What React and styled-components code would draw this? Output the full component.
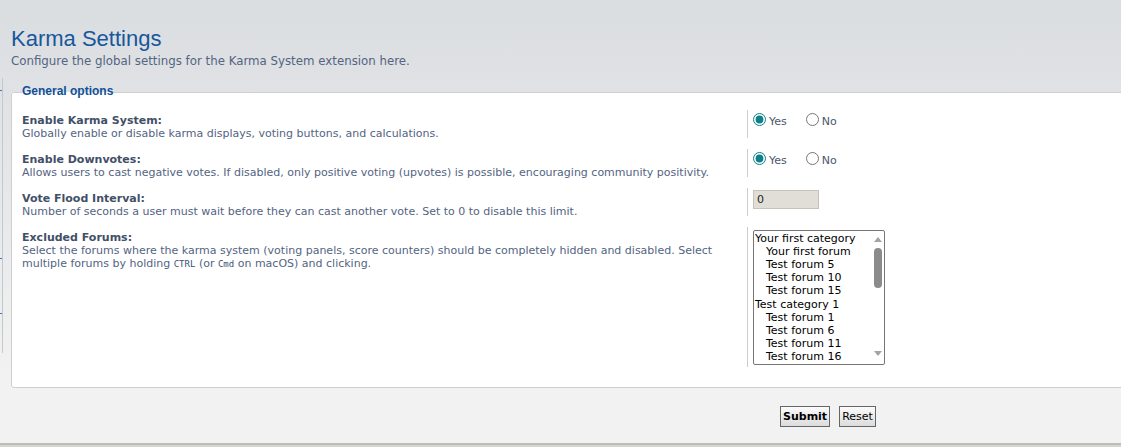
import React from "react";
import styled, { createGlobalStyle } from "styled-components";

const GlobalStyle = createGlobalStyle`
  html, body {
    margin: 0;
    padding: 0;
  }
  body {
    font-family: "DejaVu Sans", Verdana, sans-serif;
    font-size: 11px;
    color: #536482;
    background: #f2f2f2;
    overflow: hidden;
  }
`;

const Page = styled.div`
  display: flex;
  flex-direction: column;
  background: linear-gradient(to bottom, #dadde0 0, #f2f2f2 380px);
`;

const Body = styled.div`
  display: flex;
`;

/* edge of the side menu, mostly scrolled away */
const Rail = styled.div`
  width: 11px;
  flex: none;
`;

const RailLine = styled.div`
  position: relative;
  margin-top: 78px;
  width: 2px;
  height: 275px;
  border-right: 1px solid #c3c8ce;
`;

const RailTick = styled.span`
  position: absolute;
  left: 0;
  top: ${(p) => p.$top}px;
  width: 2px;
  height: 1px;
  background: #3b76bb;
`;

const Main = styled.main`
  flex: 1;
  min-width: 0;
`;

const Title = styled.h1`
  margin: 27px 0 0;
  font: normal 22px/24px "Liberation Sans", Arial, sans-serif;
  color: #17579c;
`;

const Intro = styled.p`
  margin: 4px 0 0;
  font-size: 11.8px;
  line-height: 13px;
`;

const Fieldset = styled.fieldset`
  min-width: 0;
  margin: 16px -30px 0 0;
  padding: 10px 10px 11px;
  border: 1px solid #cfcfcf;
  border-radius: 3px;
  background: #fff;
`;

const Legend = styled.legend`
  padding: 0 0 2px;
  font: bold 12px/14px "Liberation Sans", Arial, sans-serif;
  color: #115098;
`;

const Row = styled.dl`
  display: flex;
  align-items: flex-start;
  margin: 0 0 9px;
`;

const Term = styled.dt`
  width: 725px;
  flex: none;
  padding-top: 4px;
  line-height: 13px;
`;

const Label = styled.label`
  display: block;
  font-weight: bold;
  color: #425067;
`;

const Explain = styled.span`
  display: block;
  color: #536482;
`;

const Kbd = styled.kbd`
  font-family: "DejaVu Sans Mono", monospace;
  font-size: 9px;
  line-height: 1;
  color: #3b5375;
`;

const Value = styled.dd`
  box-sizing: border-box;
  min-height: 28px;
  margin: 0;
  padding: ${(p) => p.$padY || 0}px 0 ${(p) => p.$padY || 0}px 5px;
  border-left: 1px solid #cccccc;
`;

const RadioLabel = styled.label`
  display: inline-flex;
  align-items: flex-start;
  margin-right: 19px;
  line-height: 13px;
  color: #4a566a;
`;

const Radio = styled.input.attrs({ type: "radio" })`
  width: 13px;
  height: 13px;
  margin: 3px 3px 0 0;
  accent-color: #0d8189;
`;

const RadioText = styled.span`
  padding-top: 5px;
`;

const NumberInput = styled.input`
  box-sizing: border-box;
  width: 66px;
  height: 19px;
  margin: 0;
  padding: 0 3px;
  border: 1px solid #c7c3bb;
  background: #e1ded8;
  font: 11px "DejaVu Sans", Verdana, sans-serif;
  color: #222;
`;

const ForumList = styled.div`
  box-sizing: border-box;
  display: flex;
  width: 132px;
  height: 135px;
  border: 1px solid #767676;
  border-radius: 2px;
  background: #fff;
  overflow: hidden;
`;

const Options = styled.ul`
  flex: 1;
  margin: 0;
  padding: 1px 0 0 1px;
  list-style: none;
  line-height: 13.2px;
  color: #000;
  white-space: nowrap;
  overflow: hidden;
`;

const Option = styled.li`
  padding-left: ${(p) => (p.$indent ? 11 : 0)}px;
`;

const Scroll = styled.div`
  box-sizing: border-box;
  width: 13px;
  flex: none;
  display: flex;
  flex-direction: column;
  align-items: center;
  padding: 6px 0 8px;
`;

const ArrowUp = styled.span`
  width: 0;
  height: 0;
  border-left: 4px solid transparent;
  border-right: 4px solid transparent;
  border-bottom: 5px solid #a3a3a3;
`;

const ArrowDown = styled(ArrowUp)`
  margin-top: auto;
  border-bottom: 0;
  border-top: 5px solid #a3a3a3;
`;

const Thumb = styled.span`
  margin-top: 6px;
  width: 8px;
  height: 40px;
  border-radius: 4px;
  background: #8b8b8b;
`;

const Actions = styled.div`
  display: flex;
  gap: 9px;
  margin: 18px 0 16px 769px;
`;

const Button = styled.button`
  box-sizing: border-box;
  height: 21px;
  padding: 0 2px;
  border: 1px solid #666;
  border-radius: 0;
  background: linear-gradient(#fbfbfb, #dcdcdc);
  font: ${(p) => (p.$primary ? "bold" : "normal")} 11px "DejaVu Sans", Verdana, sans-serif;
  color: #000;
`;

const Footer = styled.footer`
  height: 2px;
  border-top: 2px solid #bcbcbc;
  background: #d8d5d1;
`;

const forums = [
  { name: "Your first category" },
  { name: "Your first forum", indent: true },
  { name: "Test forum 5", indent: true },
  { name: "Test forum 10", indent: true },
  { name: "Test forum 15", indent: true },
  { name: "Test category 1" },
  { name: "Test forum 1", indent: true },
  { name: "Test forum 6", indent: true },
  { name: "Test forum 11", indent: true },
  { name: "Test forum 16", indent: true },
];

function YesNo({ name }) {
  return (
    <Value>
      <RadioLabel>
        <Radio name={name} defaultChecked />
        <RadioText>Yes</RadioText>
      </RadioLabel>
      <RadioLabel>
        <Radio name={name} />
        <RadioText>No</RadioText>
      </RadioLabel>
    </Value>
  );
}

export default function App() {
  return (
    <Page>
      <GlobalStyle />
      <Body>
        <Rail>
          <RailLine>
            <RailTick $top={12} />
            <RailTick $top={180} />
            <RailTick $top={235} />
          </RailLine>
        </Rail>
        <Main>
          <Title>Karma Settings</Title>
          <Intro>Configure the global settings for the Karma System extension here.</Intro>

          <Fieldset>
            <Legend>General options</Legend>

            <Row>
              <Term>
                <Label>Enable Karma System:</Label>
                <Explain>Globally enable or disable karma displays, voting buttons, and calculations.</Explain>
              </Term>
              <YesNo name="karma_enabled" />
            </Row>

            <Row>
              <Term>
                <Label>Enable Downvotes:</Label>
                <Explain>
                  Allows users to cast negative votes. If disabled, only positive voting (upvotes) is possible,
                  encouraging community positivity.
                </Explain>
              </Term>
              <YesNo name="karma_downvotes" />
            </Row>

            <Row>
              <Term>
                <Label>Vote Flood Interval:</Label>
                <Explain>Number of seconds a user must wait before they can cast another vote. Set to 0 to disable this limit.</Explain>
              </Term>
              <Value $padY={2}>
                <NumberInput type="text" defaultValue="0" />
              </Value>
            </Row>

            <Row>
              <Term>
                <Label>Excluded Forums:</Label>
                <Explain>
                  Select the forums where the karma system (voting panels, score counters) should be completely
                  hidden and disabled. Select multiple forums by holding <Kbd>CTRL</Kbd> (or <Kbd>Cmd</Kbd> on
                  macOS) and clicking.
                </Explain>
              </Term>
              <Value $padY={2.5}>
                <ForumList role="listbox" aria-multiselectable="true">
                  <Options>
                    {forums.map((f) => (
                      <Option key={f.name} $indent={f.indent}>
                        {f.name}
                      </Option>
                    ))}
                  </Options>
                  <Scroll>
                    <ArrowUp />
                    <Thumb />
                    <ArrowDown />
                  </Scroll>
                </ForumList>
              </Value>
            </Row>
          </Fieldset>

          <Actions>
            <Button $primary>Submit</Button>
            <Button>Reset</Button>
          </Actions>
        </Main>
      </Body>
      <Footer />
    </Page>
  );
}
